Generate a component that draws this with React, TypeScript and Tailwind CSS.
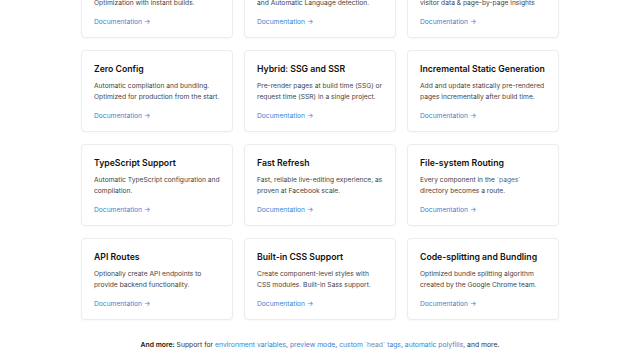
import React from "react";

interface Feature {
  title: string;
  desc: React.ReactNode;
}

const features: Feature[] = [
  { title: "Image Optimization", desc: "<Image> and Automatic Image Optimization with instant builds." },
  {
    title: "Internationalization",
    desc: (
      <>
        Built-in Domain & Subpath Routing
        <br />
        and Automatic Language detection.
      </>
    ),
  },
  { title: "Next.js Analytics", desc: "A true Lighthouse score based on real visitor data & page-by-page insights" },
  { title: "Zero Config", desc: "Automatic compilation and bundling. Optimized for production from the start." },
  { title: "Hybrid: SSG and SSR", desc: "Pre-render pages at build time (SSG) or request time (SSR) in a single project." },
  { title: "Incremental Static Generation", desc: "Add and update statically pre-rendered pages incrementally after build time." },
  { title: "TypeScript Support", desc: "Automatic TypeScript configuration and compilation." },
  { title: "Fast Refresh", desc: "Fast, reliable live-editing experience, as proven at Facebook scale." },
  {
    title: "File-system Routing",
    desc: (
      <>
        Every component in the <span className="text-[#666]">`pages`</span> directory becomes a route.
      </>
    ),
  },
  { title: "API Routes", desc: "Optionally create API endpoints to provide backend functionality." },
  { title: "Built-in CSS Support", desc: "Create component-level styles with CSS modules. Built-in Sass support." },
  { title: "Code-splitting and Bundling", desc: "Optimized bundle splitting algorithm created by the Google Chrome team." },
];

const FeatureCard: React.FC<Feature> = ({ title, desc }) => (
  <div className="h-[82px] rounded-[4px] border border-[#ececec] bg-white px-3 pt-[11px] shadow-[0_1px_2px_rgba(0,0,0,0.03)]">
    <h3 className="text-[8.7px] leading-[14px] font-semibold text-[#111]">{title}</h3>
    <p className="mt-[5px] text-[6.7px] leading-[11px] text-[#444]">{desc}</p>
    <a className="mt-[8px] block text-[6.7px] leading-[11px] text-[#3f7fd0]">Documentation →</a>
  </div>
);

export default function App() {
  return (
    <div className="h-[360px] w-[640px] overflow-hidden bg-white" style={{ fontFamily: "Inter, 'Liberation Sans', sans-serif" }}>
      <div className="mx-auto mt-[-44px] grid w-[478px] grid-cols-3 gap-x-[11px] gap-y-[12px]">
        {features.map((f) => (
          <FeatureCard key={f.title} {...f} />
        ))}
      </div>
      <p className="mt-[19px] text-center text-[6.8px] leading-[11px] text-[#333]">
        <span className="font-semibold text-[#111]">And more:</span> Support for{" "}
        <a className="text-[#3f7fd0]">environment variables</a>, <a className="text-[#3f7fd0]">preview mode</a>,{" "}
        <a className="text-[#3f7fd0]">
          custom <span className="text-[#888]">`head`</span> tags
        </a>
        , <a className="text-[#3f7fd0]">automatic polyfills</a>, and more.
      </p>
    </div>
  );
}
